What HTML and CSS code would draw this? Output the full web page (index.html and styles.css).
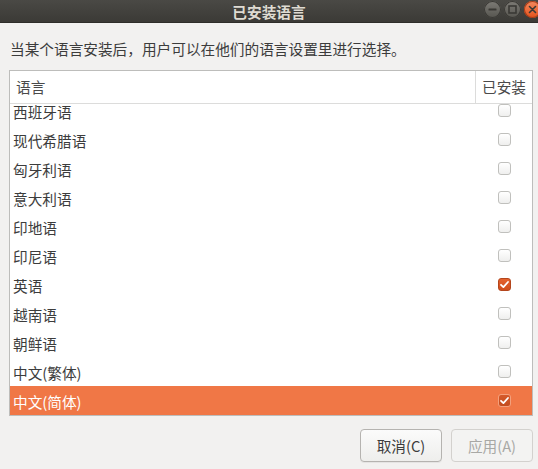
FILE: index.html
```html
<!DOCTYPE html>
<html lang="zh-CN">
<head>
<meta charset="utf-8">
<title>已安装语言</title>
<link rel="stylesheet" href="styles.css">
</head>
<body>
<div class="titlebar">
  <div></div>
  <div class="title">已安装语言</div>
  <div class="wbtns">
    <span class="wbtn"><svg width="17" height="17" viewBox="0 0 17 17"><rect x="4.5" y="7.5" width="8" height="2" rx="0.5" fill="#3a3935"/></svg></span>
    <span class="wbtn"><svg width="17" height="17" viewBox="0 0 17 17"><rect x="5" y="5" width="7" height="7" fill="none" stroke="#3a3935" stroke-width="1.6"/></svg></span>
    <span class="wbtn close"><svg width="17" height="17" viewBox="0 0 17 17"><path d="M5.5 5.5 L11.5 11.5 M11.5 5.5 L5.5 11.5" stroke="#3a3935" stroke-width="1.6" stroke-linecap="round"/></svg></span>
  </div>
</div>
<div class="content">
  <p class="desc">当某个语言安装后，用户可以在他们的语言设置里进行选择。</p>
  <div class="listbox">
    <div class="header">
      <div class="hcol lang">语言</div>
      <div class="hcol inst">已安装</div>
    </div>
    <div class="rows">
      <div class="rows-inner">
        <div class="row"><span class="name">西班牙语</span><span class="cell"><span class="cb"></span></span></div>
        <div class="row"><span class="name">现代希腊语</span><span class="cell"><span class="cb"></span></span></div>
        <div class="row"><span class="name">匈牙利语</span><span class="cell"><span class="cb"></span></span></div>
        <div class="row"><span class="name">意大利语</span><span class="cell"><span class="cb"></span></span></div>
        <div class="row"><span class="name">印地语</span><span class="cell"><span class="cb"></span></span></div>
        <div class="row"><span class="name">印尼语</span><span class="cell"><span class="cb"></span></span></div>
        <div class="row"><span class="name">英语</span><span class="cell"><span class="cb checked"><svg width="13" height="13" viewBox="0 0 13 13"><path d="M3 6.8 L5.4 9.1 L10 4" fill="none" stroke="#fff" stroke-width="1.8" stroke-linecap="round" stroke-linejoin="round"/></svg></span></span></div>
        <div class="row"><span class="name">越南语</span><span class="cell"><span class="cb"></span></span></div>
        <div class="row"><span class="name">朝鲜语</span><span class="cell"><span class="cb"></span></span></div>
        <div class="row"><span class="name">中文(繁体)</span><span class="cell"><span class="cb"></span></span></div>
        <div class="row selected"><span class="name">中文(简体)</span><span class="cell"><span class="cb checked sel"><svg width="13" height="13" viewBox="0 0 13 13"><path d="M3 6.8 L5.4 9.1 L10 4" fill="none" stroke="#fff" stroke-width="1.8" stroke-linecap="round" stroke-linejoin="round"/></svg></span></span></div>
      </div>
    </div>
  </div>
  <div class="actions">
    <button class="btn">取消(C)</button>
    <button class="btn disabled">应用(A)</button>
  </div>
</div>
</body>
</html>
```

FILE: styles.css
```css
html, body {
  margin: 0;
  padding: 0;
}
body {
  width: 538px;
  height: 469px;
  overflow: hidden;
  background: #f2f1f0;
  font-family: "Noto Sans CJK SC", "Noto Sans", sans-serif;
  font-size: 14.67px;
  color: #3c3c3c;
}
.titlebar {
  height: 23px;
  display: grid;
  grid-template-columns: 1fr auto 1fr;
  align-items: center;
  background: linear-gradient(#4a4945, #3b3a36);
  border-bottom: 1px solid #2e2d2a;
  box-sizing: border-box;
}
.title {
  color: #dfdbd2;
  font-weight: bold;
  font-size: 14.67px;
  line-height: 23px;
}
.wbtns {
  justify-self: end;
  align-self: start;
  display: flex;
  gap: 3px;
  margin-top: 1px;
  margin-right: -3px;
}
.wbtn {
  width: 17px;
  height: 17px;
  border-radius: 50%;
  box-sizing: border-box;
  background: linear-gradient(#7d7b76, #56554f);
  box-shadow: inset 0 0 0 1px #3a3935;
  display: block;
}
.wbtn svg { display: block; }
.wbtn.close {
  background: linear-gradient(#f58a5f, #e2521c);
  box-shadow: inset 0 0 0 1px #a53c18;
}
.content {
  padding: 0 5px 0 9px;
}
.desc {
  margin: 16px 0 0 1px;
  line-height: 20px;
  height: 20px;
}
.listbox {
  margin-top: 11px;
  border: 1px solid #bdbdbb;
  background: #fff;
  height: 346px;
  box-sizing: border-box;
  display: flex;
  flex-direction: column;
}
.header {
  height: 33px;
  flex: none;
  display: flex;
  border-bottom: 1px solid #dcdcdb;
  box-sizing: border-box;
}
.hcol {
  line-height: 32px;
  padding-left: 6px;
  color: #4a4a4a;
}
.hcol.lang {
  flex: 1;
  border-right: 1px solid #dcdcdb;
}
.hcol.inst {
  width: 50px;
}
.rows {
  flex: 1;
  overflow: hidden;
}
.rows-inner {
  margin-top: -8px;
}
.row {
  height: 29px;
  display: flex;
  align-items: center;
}
.row .name {
  flex: 1;
  padding-left: 3px;
  line-height: 29px;
  padding-top: 2px;
}
.row .cell {
  width: 56px;
  display: flex;
  justify-content: center;
}
.row.selected {
  background: #f07746;
  color: #ffffff;
}
.cb {
  width: 13px;
  height: 13px;
  box-sizing: border-box;
  border: 1px solid #c0c0bd;
  border-radius: 3px;
  background: linear-gradient(#ffffff, #efefee);
  display: block;
  position: relative;
}
.cb svg {
  display: block;
  margin: -1px;
}
.cb.checked {
  background: linear-gradient(#e4622e, #cf4c1a);
  border-color: #b4461c;
}
.cb.sel {
  background: linear-gradient(#d65a2a, #c24c1e);
  border-color: #f3a07d;
}
.actions {
  display: flex;
  justify-content: flex-end;
  gap: 9px;
  margin-top: 13px;
}
.btn {
  width: 82px;
  height: 33px;
  font-family: "Noto Sans CJK SC", "Noto Sans", sans-serif;
  font-size: 14.67px;
  color: #3c3c3c;
  border: 1px solid #b5b3b0;
  border-radius: 4px;
  background: linear-gradient(#fbfbfb, #eeeeec);
  box-shadow: 0 1px 0 rgba(0,0,0,0.05);
  padding: 0;
}
.btn.disabled {
  color: #a8a8a5;
  border-color: #d3d1ce;
  background: #f3f3f2;
  box-shadow: none;
}
```
